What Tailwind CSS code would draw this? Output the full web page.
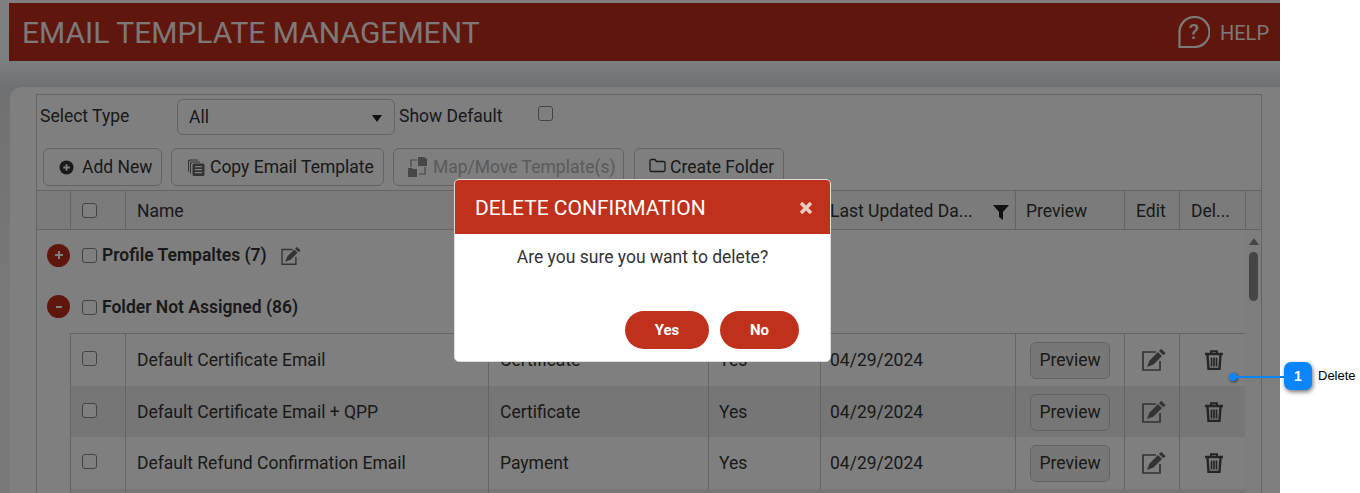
<!DOCTYPE html>
<html lang="en">
<head>
  <meta charset="UTF-8" />
  <title>Email Template Management</title>
  <script src="https://cdn.jsdelivr.net/npm/@tailwindcss/browser@4"></script>
</head>
<body class="bg-white font-['Roboto',sans-serif] text-[17.5px] text-[#333]">
<div class="relative w-[1360px] h-[493px] overflow-hidden">

  <!-- Page -->
  <div class="w-[1280px] h-[493px] bg-[linear-gradient(#ffffff_0,#ffffff_3px,#f7ffff_61px,#dce4e8_87px,#eef3f6_300px)] pt-[3px]">
    <header class="ml-[9px] h-[58px] bg-[#bf2f1b] flex items-center justify-between pl-[13px] pr-[11px]">
      <h1 class="text-[30px] text-white/95 font-normal">EMAIL TEMPLATE MANAGEMENT</h1>
      <div class="flex items-center gap-[10px] text-white/95 text-[20px]">
        <span class="relative block size-[32px]">
          <svg viewBox="0 0 32 32" class="size-[32px]" fill="none" stroke="currentColor" stroke-width="2.2"><path d="M1.500 31V16A15 15 0 1 1 16.500 31Z"/></svg>
          <span class="absolute inset-0 flex items-center justify-center text-[21px] font-medium leading-none">?</span>
        </span>
        <span class="mt-[1px]">HELP</span>
      </div>
    </header>

    <section class="ml-[10px] mt-[26px] h-[406px] rounded-tl-[12px] bg-[#fefefe] pt-[7px] pl-[26px] pr-[18px]">
      <div class="h-[399px] border-l border-t border-r border-[#c8c8c8] bg-white overflow-hidden">

        <!-- Filters -->
        <div class="h-[53px] flex items-start pt-[4px] pl-[3px]">
          <span class="w-[137px] pt-[4px]">Select Type</span>
          <div class="w-[218px] h-[36px] border border-[#c4c4c4] rounded-[6px] flex items-center justify-between pl-[11px] pr-[12px]">
            <span>All</span>
            <span class="w-0 h-0 mt-[3px] border-x-[5px] border-x-transparent border-t-[7px] border-t-[#222]"></span>
          </div>
          <span class="ml-[4px] w-[139px] pt-[4px]">Show Default</span>
          <input type="checkbox" class="appearance-none mt-[7px] size-[15px] border border-[#888] rounded-[3px] bg-white" />
        </div>

        <!-- Toolbar -->
        <div class="h-[42px] flex items-start pl-[6px] gap-[9px]">
          <button class="h-[38px] w-[119px] border border-[#c4c4c4] rounded-[6px] flex items-center gap-[8px] pl-[15px]">
            <svg viewBox="0 0 16 16" class="size-[15px]"><circle cx="8" cy="8" r="7.500" fill="#333"/><path d="M8 4.500v7M4.500 8h7" stroke="#fff" stroke-width="2"/></svg>
            Add New
          </button>
          <button class="h-[38px] w-[213px] border border-[#c4c4c4] rounded-[6px] flex items-center gap-[5px] pl-[15px]">
            <svg viewBox="0 0 18 18" class="size-[18px]" fill="#666"><path d="M1 3.500A2 2 0 0 1 3 1.500h8v1H4a2 2 0 0 0-2 2V14a1 1 0 0 1-1-1Z"/><path d="M3 5.500a2 2 0 0 1 2-2h8v1H6a2 2 0 0 0-2 2V16a1 1 0 0 1-1-1Z"/><path fill-rule="evenodd" d="M5.500 7a1.500 1.500 0 0 1 1.500-1.500h9A1.500 1.500 0 0 1 17.500 7v9.500A1.500 1.500 0 0 1 16 18H7a1.500 1.500 0 0 1-1.500-1.500ZM8 8v1.200h7V8Zm0 3v1.200h7V11Zm0 3v1.200h7V14Z"/></svg>
            Copy Email Template
          </button>
          <button class="h-[38px] w-[231px] border border-[#c4c4c4] rounded-[6px] flex items-center gap-[5px] pl-[14px] text-[#b5b5b5]">
            <svg viewBox="0 0 20 20" class="size-[20px]" fill="#8f8f8f"><path d="M10 0h6l3 2v7h-9Z"/><path d="M0 11h4l1 1h4v8H0Z"/><path d="M3 10V3h6M17 10v7h-6" fill="none" stroke="#8f8f8f" stroke-width="1.200"/></svg>
            Map/Move Template(s)
          </button>
          <button class="ml-[1px] h-[38px] w-[150px] border border-[#c4c4c4] rounded-[6px] flex items-center gap-[4px] pl-[14px]">
            <svg viewBox="0 0 17 15" class="w-[17px] h-[15px] -mt-[3px]" fill="none" stroke="#333" stroke-width="1.300"><path d="M1 3a1.500 1.500 0 0 1 1.500-1.500h3.500L7.500 3.500h7A1.500 1.500 0 0 1 16 5v7a1.500 1.500 0 0 1-1.500 1.500h-12A1.500 1.500 0 0 1 1 12Z"/></svg>
            Create Folder
          </button>
        </div>

        <!-- Column headers -->
        <div class="h-[40px] grid grid-cols-[33px_55px_363px_220px_112px_195px_109px_55px_67px_1fr] bg-[#f6f6f6] border-y border-[#c8c8c8]">
          <div></div>
          <div class="border-l border-[#c8c8c8] flex items-center pl-[11px]"><input type="checkbox" class="appearance-none size-[15px] border border-[#888] rounded-[3px] bg-white" /></div>
          <div class="border-l border-[#c8c8c8] flex items-center pl-[11px] pt-[2px]">Name</div>
          <div class="border-l border-[#c8c8c8]"></div>
          <div class="border-l border-[#c8c8c8]"></div>
          <div class="border-l border-[#c8c8c8] flex items-center justify-between pl-[9px] pr-[6px] pt-[2px] whitespace-nowrap overflow-hidden">
            <span>Last Updated Da...</span>
            <svg viewBox="0 0 16 15" class="w-[16px] h-[15px] shrink-0 mt-[2px]"><path d="M0 0h16L10 7v8l-4-3V7Z" fill="#222"/></svg>
          </div>
          <div class="border-l border-[#c8c8c8] flex items-center pl-[10px] pt-[2px]">Preview</div>
          <div class="border-l border-[#c8c8c8] flex items-center pl-[11px] pt-[2px]">Edit</div>
          <div class="border-l border-[#c8c8c8] flex items-center pl-[11px] pt-[2px] border-r">Del...</div>
          <div></div>
        </div>

        <div class="relative">
          <!-- Scrollbar -->
          <div class="absolute right-0 top-0 bottom-0 w-[16px] bg-[#fbfbfb]">
            <span class="absolute left-[4px] top-[8px] w-0 h-0 border-x-[5px] border-x-transparent border-b-[7px] border-b-[#8a8a8a]"></span>
            <span class="absolute left-[4px] top-[22px] w-[9px] h-[49px] rounded-[5px] bg-[#8a8a8a]"></span>
          </div>

          <!-- Folders -->
          <div class="h-[51px] flex items-center pl-[10px]">
            <span class="size-[23px] rounded-full bg-[#bf2f1b] text-white flex items-center justify-center mr-[12px] -mt-[1px]">
              <svg viewBox="0 0 10 10" class="size-[10px]"><path d="M5 1v8M1 5h8" stroke="#fff" stroke-width="2"/></svg>
            </span>
            <input type="checkbox" class="appearance-none size-[15px] border border-[#888] rounded-[3px] bg-white mr-[5px]" />
            <span class="font-semibold">Profile Tempaltes (7)</span>
            <svg viewBox="0 0 24 22" class="w-[20px] h-[18px] ml-[14px] text-[#666]"><path d="M14 3H1v18h17V12" fill="none" stroke="currentColor" stroke-width="1.700"/><path d="M5 18l2.500-6.500L16 3l4 4-8.500 8.500ZM17 2l1.500-1.500a1 1 0 0 1 1.500 0l3 3a1 1 0 0 1 0 1.500L21 6Z" fill="currentColor"/></svg>
          </div>
          <div class="h-[52px] flex items-center pl-[10px]">
            <span class="size-[23px] rounded-full bg-[#bf2f1b] text-white flex items-center justify-center mr-[12px] -mt-[1px]">
              <svg viewBox="0 0 10 10" class="size-[10px]"><path d="M2 5h6" stroke="#fff" stroke-width="2"/></svg>
            </span>
            <input type="checkbox" class="appearance-none size-[15px] border border-[#888] rounded-[3px] bg-white mr-[5px]" />
            <span class="font-semibold">Folder Not Assigned (86)</span>
          </div>

          <!-- Templates -->
          <div class="ml-[33px] mr-[16px] border-t border-[#c8c8c8]">
            <div class="h-[52px] grid grid-cols-[55px_363px_220px_112px_195px_109px_55px_1fr]">
              <div class="border-l border-[#c8c8c8] pl-[11px] pt-[17px]"><input type="checkbox" class="appearance-none block size-[15px] border border-[#888] rounded-[3px] bg-white" /></div>
              <div class="border-l border-[#c8c8c8] pl-[11px] flex items-center">Default Certificate Email</div>
              <div class="border-l border-[#c8c8c8] pl-[11px] flex items-center">Certificate</div>
              <div class="border-l border-[#c8c8c8] pl-[10px] flex items-center">Yes</div>
              <div class="border-l border-[#c8c8c8] pl-[9px] flex items-center">04/29/2024</div>
              <div class="border-l border-[#c8c8c8] pl-[14px] flex items-center"><button class="w-[80px] h-[37px] border border-[#c4c4c4] rounded-[6px] bg-[#eeeeee]">Preview</button></div>
              <div class="border-l border-[#c8c8c8] flex items-center justify-center pl-[3px]"><svg viewBox="0 0 24 22" class="w-[24px] h-[22px] text-[#666]"><path d="M14 3H1v18h17V12" fill="none" stroke="currentColor" stroke-width="1.700"/><path d="M5 18l2.500-6.500L16 3l4 4-8.500 8.500ZM17 2l1.500-1.500a1 1 0 0 1 1.500 0l3 3a1 1 0 0 1 0 1.500L21 6Z" fill="currentColor"/></svg></div>
              <div class="border-l border-[#c8c8c8] flex items-center justify-center pl-[3px]"><svg viewBox="0 0 18 20" class="w-[18px] h-[20px] text-[#4a4a4a]" fill="none" stroke="currentColor"><path d="M6 3V1.200h6V3" stroke-width="2"/><path d="M0 4h18" stroke-width="2.500"/><path d="M2.500 5l1 14h11l1-14" stroke-width="2.400"/><path d="M6.500 7.500v9M9 7.500v9M11.500 7.500v9" stroke-width="1.700"/></svg></div>
            </div>
            <div class="h-[51px] grid grid-cols-[55px_363px_220px_112px_195px_109px_55px_1fr] bg-[#ececec]">
              <div class="border-l border-[#c8c8c8] pl-[11px] pt-[17px]"><input type="checkbox" class="appearance-none block size-[15px] border border-[#888] rounded-[3px] bg-white" /></div>
              <div class="border-l border-[#c8c8c8] pl-[11px] pt-[2px] flex items-center">Default Certificate Email + QPP</div>
              <div class="border-l border-[#c8c8c8] pl-[11px] pt-[2px] flex items-center">Certificate</div>
              <div class="border-l border-[#c8c8c8] pl-[10px] pt-[2px] flex items-center">Yes</div>
              <div class="border-l border-[#c8c8c8] pl-[9px] pt-[2px] flex items-center">04/29/2024</div>
              <div class="border-l border-[#c8c8c8] pl-[14px] pt-[1px] flex items-center"><button class="w-[80px] h-[37px] border border-[#c4c4c4] rounded-[6px] bg-[#ececec]">Preview</button></div>
              <div class="border-l border-[#c8c8c8] flex items-center justify-center pl-[3px]"><svg viewBox="0 0 24 22" class="w-[24px] h-[22px] text-[#666]"><path d="M14 3H1v18h17V12" fill="none" stroke="currentColor" stroke-width="1.700"/><path d="M5 18l2.500-6.500L16 3l4 4-8.500 8.500ZM17 2l1.500-1.500a1 1 0 0 1 1.500 0l3 3a1 1 0 0 1 0 1.500L21 6Z" fill="currentColor"/></svg></div>
              <div class="border-l border-[#c8c8c8] flex items-center justify-center pl-[3px]"><svg viewBox="0 0 18 20" class="w-[18px] h-[20px] text-[#4a4a4a]" fill="none" stroke="currentColor"><path d="M6 3V1.200h6V3" stroke-width="2"/><path d="M0 4h18" stroke-width="2.500"/><path d="M2.500 5l1 14h11l1-14" stroke-width="2.400"/><path d="M6.500 7.500v9M9 7.500v9M11.500 7.500v9" stroke-width="1.700"/></svg></div>
            </div>
            <div class="h-[52px] grid grid-cols-[55px_363px_220px_112px_195px_109px_55px_1fr]">
              <div class="border-l border-[#c8c8c8] pl-[11px] pt-[17px]"><input type="checkbox" class="appearance-none block size-[15px] border border-[#888] rounded-[3px] bg-white" /></div>
              <div class="border-l border-[#c8c8c8] pl-[11px] flex items-center">Default Refund Confirmation Email</div>
              <div class="border-l border-[#c8c8c8] pl-[11px] flex items-center">Payment</div>
              <div class="border-l border-[#c8c8c8] pl-[10px] flex items-center">Yes</div>
              <div class="border-l border-[#c8c8c8] pl-[9px] flex items-center">04/29/2024</div>
              <div class="border-l border-[#c8c8c8] pl-[14px] flex items-center"><button class="w-[80px] h-[37px] border border-[#c4c4c4] rounded-[6px] bg-[#eeeeee]">Preview</button></div>
              <div class="border-l border-[#c8c8c8] flex items-center justify-center pl-[3px]"><svg viewBox="0 0 24 22" class="w-[24px] h-[22px] text-[#666]"><path d="M14 3H1v18h17V12" fill="none" stroke="currentColor" stroke-width="1.700"/><path d="M5 18l2.500-6.500L16 3l4 4-8.500 8.500ZM17 2l1.500-1.500a1 1 0 0 1 1.500 0l3 3a1 1 0 0 1 0 1.500L21 6Z" fill="currentColor"/></svg></div>
              <div class="border-l border-[#c8c8c8] flex items-center justify-center pl-[3px]"><svg viewBox="0 0 18 20" class="w-[18px] h-[20px] text-[#4a4a4a]" fill="none" stroke="currentColor"><path d="M6 3V1.200h6V3" stroke-width="2"/><path d="M0 4h18" stroke-width="2.500"/><path d="M2.500 5l1 14h11l1-14" stroke-width="2.400"/><path d="M6.500 7.500v9M9 7.500v9M11.500 7.500v9" stroke-width="1.700"/></svg></div>
            </div>
            <div class="h-[10px] grid grid-cols-[55px_363px_1fr] bg-[#ececec]">
              <div class="border-l border-[#c8c8c8]"></div>
              <div class="border-l border-[#c8c8c8]"></div>
              <div class="border-l border-[#c8c8c8]"></div>
            </div>
          </div>
        </div>
      </div>
    </section>
  </div>

  <!-- Modal backdrop -->
  <div class="absolute left-0 top-0 w-[1280px] h-[493px] bg-black/50"></div>

  <!-- Delete confirmation -->
  <div class="absolute left-[454px] top-[179px] w-[377px] h-[183px] bg-white border border-[#ddd] rounded-[5px] overflow-hidden">
    <div class="h-[54px] bg-[#bf311a] flex items-center justify-between pl-[20px] pr-[17px] text-white">
      <span class="text-[21px] mt-[4px]">DELETE CONFIRMATION</span>
      <svg viewBox="0 0 14 14" class="size-[14px] mt-[2px] opacity-75"><path d="M2 2l10 10M12 2L2 12" stroke="#fff" stroke-width="3.500"/></svg>
    </div>
    <p class="text-center pt-[10px] h-[77px] text-[#333]">Are you sure you want to delete?</p>
    <div class="flex justify-end gap-[11px] pr-[31px]">
      <button class="w-[84px] h-[38px] rounded-full bg-[#bf311a] text-white text-[15px] font-bold">Yes</button>
      <button class="w-[79px] h-[38px] rounded-full bg-[#bf311a] text-white text-[15px] font-bold">No</button>
    </div>
  </div>

  <!-- Callout -->
  <span class="absolute left-[1229px] top-[373px] size-[8px] rounded-full bg-[#0a84ff] shadow-[1px_1px_3px_rgba(0,0,0,0.6)]"></span>
  <span class="absolute left-[1236px] top-[376px] w-[48px] h-[2px] bg-[#0a84ff]"></span>
  <div class="absolute left-[1284px] top-[362px] w-[28px] h-[28px] rounded-[7px] bg-[#0a84ff] text-white text-[14px] font-bold font-['Liberation_Sans',sans-serif] flex items-center justify-center shadow-[1px_2px_4px_rgba(0,0,0,0.55)]">1</div>
  <span class="absolute left-[1318px] top-[368px] text-[13px] leading-[16px] text-black font-['Liberation_Sans',sans-serif]">Delete</span>
</div>
</body>
</html>
